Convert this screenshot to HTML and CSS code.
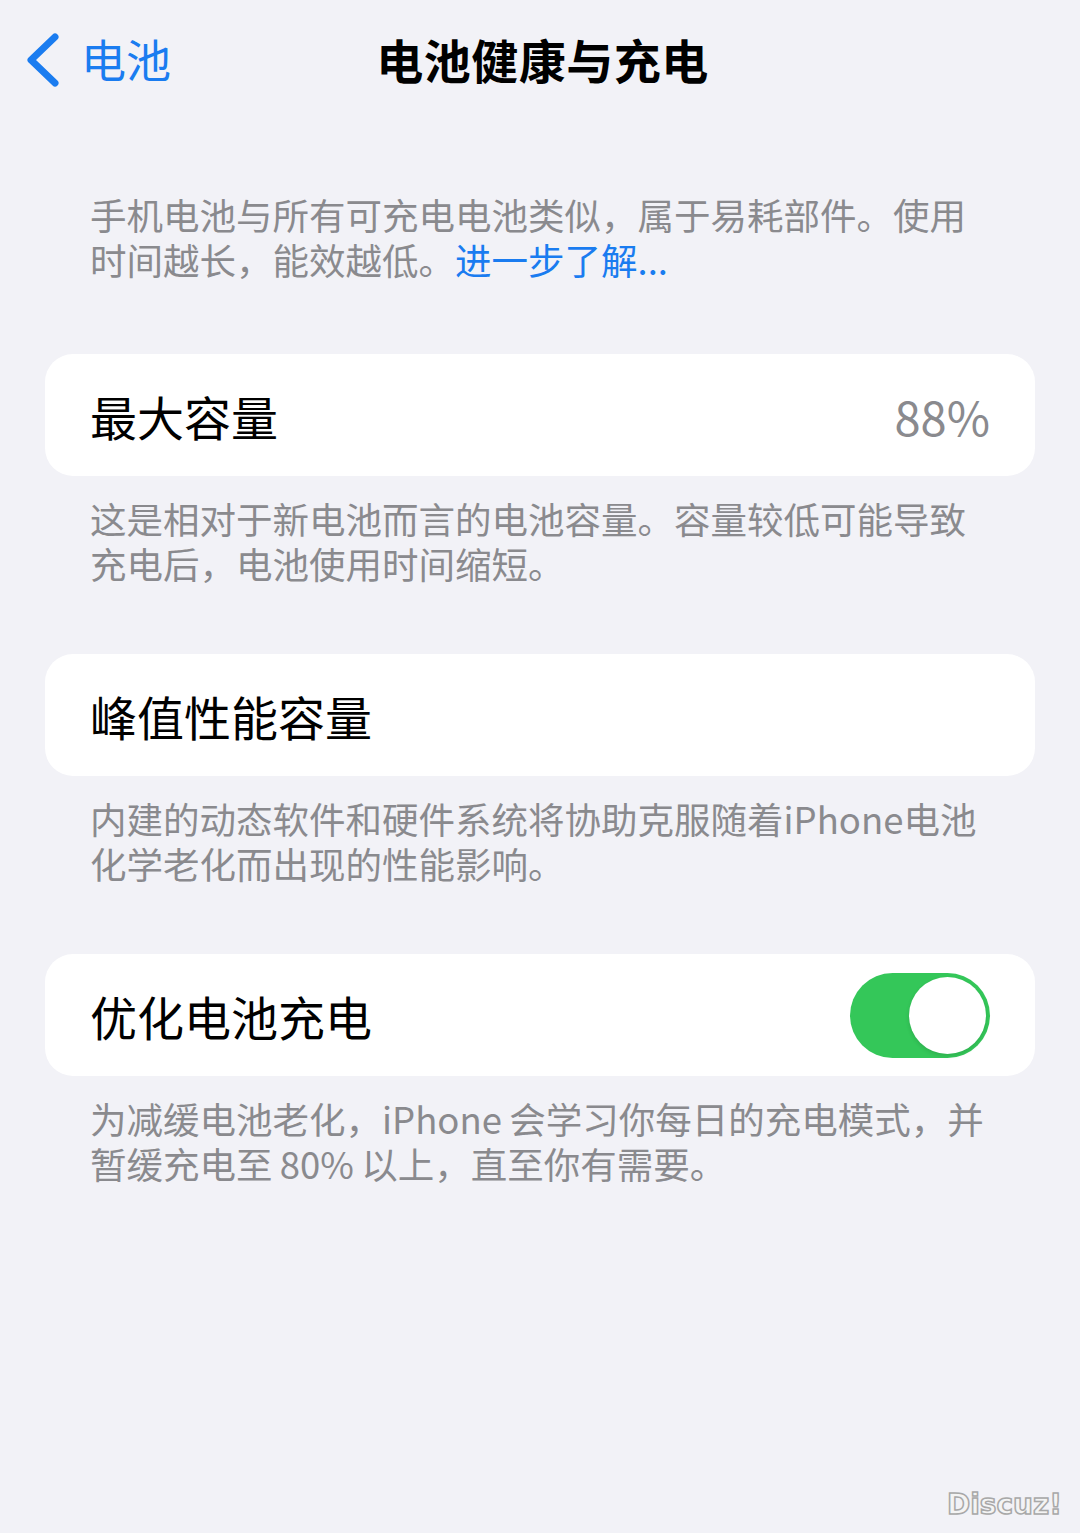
FILE: index.html
```html
<!DOCTYPE html>
<html lang="zh-CN">
<head>
<meta charset="UTF-8" />
<meta name="viewport" content="width=device-width, initial-scale=1" />
<title>电池健康与充电</title>
<link rel="stylesheet" href="styles.css">
</head>
<body>
  <div class="page">
    <!-- 顶部导航 -->
    <div class="nav">
      <a class="back" href="#">
        <svg class="chevron" width="36" height="54" viewBox="0 0 36 54">
          <polyline points="30,4 6,27 30,50" fill="none" stroke="#1a7cf0" stroke-width="7" stroke-linecap="round" stroke-linejoin="round" />
        </svg>
        <span>电池</span>
      </a>
      <h1 class="title">电池健康与充电</h1>
      <div></div>
    </div>

    <p class="caption intro">手机电池与所有可充电电池类似，属于易耗部件。使用时间越长，能效越低。<a class="link" href="#">进一步了解...</a></p>

    <div class="card first">
      <span class="label">最大容量</span>
      <span class="value">88%</span>
    </div>
    <p class="caption">这是相对于新电池而言的电池容量。容量较低可能导致充电后，电池使用时间缩短。</p>

    <div class="card">
      <span class="label">峰值性能容量</span>
    </div>
    <p class="caption">内建的动态软件和硬件系统将协助克服随着iPhone电池化学老化而出现的性能影响。</p>

    <div class="card">
      <span class="label">优化电池充电</span>
      <label class="switch">
        <input type="checkbox" checked />
        <span class="track"><span class="knob"></span></span>
      </label>
    </div>
    <p class="caption">为减缓电池老化，iPhone&thinsp;会学习你每日的充电模式，并暂缓充电至&thinsp;80%&thinsp;以上，直至你有需要。</p>
  </div>

  <div class="watermark">Discuz!</div>
</body>
</html>
```

FILE: styles.css
```css
body { margin: 0; background: #f2f2f7; font-family: "Noto Sans CJK SC", "Noto Sans", sans-serif; color: #000; }
.page { padding: 0 45px; min-height: 1533px; box-sizing: border-box; }

.nav { display: grid; grid-template-columns: 1fr auto 1fr; align-items: center; height: 124px; margin: 0 -45px; padding: 0 20px 8px 25px; box-sizing: border-box; }
.back { display: flex; align-items: center; gap: 20px; color: #1a7cf0; text-decoration: none; font-size: 45px; line-height: 1; }
.back .chevron { display: block; margin-top: 4px; }
.title { margin: 0; font-size: 47px; font-weight: 700; letter-spacing: 0.5px; }

.caption { margin: 20px 0 0; padding: 0 45px; font-size: 36.5px; line-height: 45px; color: #8a8a8e; }
.caption.intro { margin-top: 68px; }
.link { display: inline-block; color: #1a7cf0; text-decoration: none; }

.card { display: flex; align-items: center; justify-content: space-between; height: 122px; margin-top: 68px; padding: 0 45px; background: #fff; border-radius: 28px; }
.card.first { margin-top: 72px; }
.label { font-size: 47px; line-height: 1; }
.value { font-size: 47px; line-height: 1; color: #8a8a8e; }

.switch { display: block; }
.switch input { display: none; }
.track { display: flex; justify-content: flex-end; align-items: center; width: 140px; height: 85px; padding: 4px; box-sizing: border-box; border-radius: 43px; background: #34c759; }
.knob { width: 77px; height: 77px; border-radius: 50%; background: #fff; box-shadow: 0 2px 4px rgba(0, 0, 0, 0.12); }

.watermark { position: absolute; right: 18px; top: 1488px; font-family: "DejaVu Sans", sans-serif; font-weight: 700; font-size: 28px; color: #f4f4f4; -webkit-text-stroke: 1.5px #a8a8a8; }
```
